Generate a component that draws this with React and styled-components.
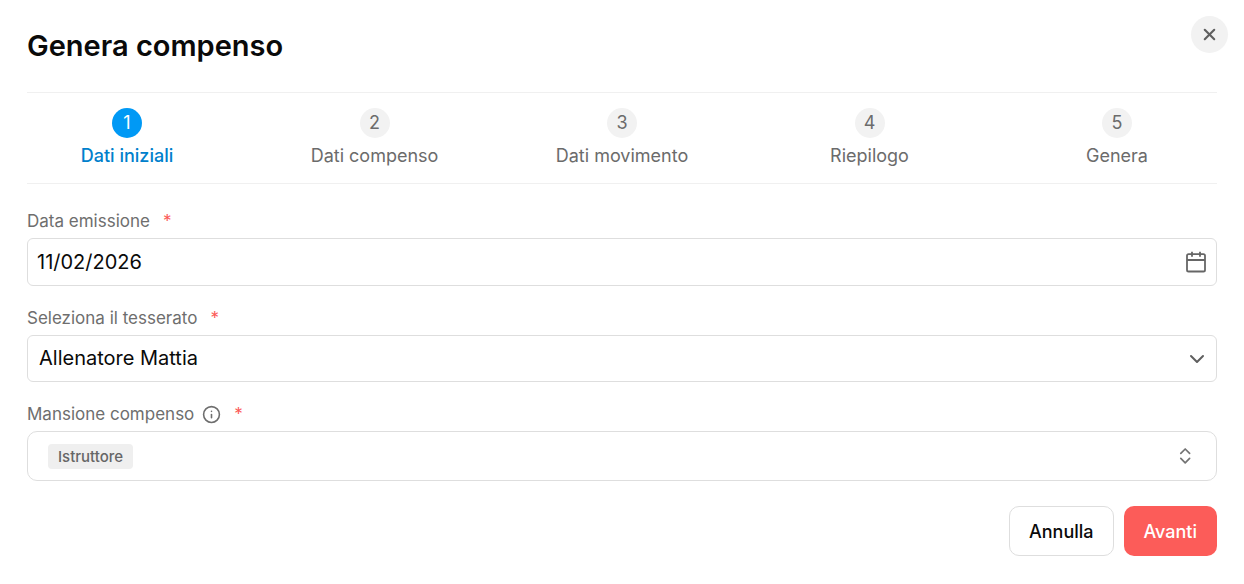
import React, { useState } from "react"
import styled, { createGlobalStyle } from "styled-components"
import { ChevronDown, Info, X } from "lucide-react"

const GlobalStyle = createGlobalStyle`
  *, *::before, *::after {
    box-sizing: border-box;
  }
  body {
    margin: 0;
    background: #fff;
    color: #0a0a0a;
    font-family: Inter, "Liberation Sans", sans-serif;
    font-size: 18px;
  }
  button, input, select {
    font-family: inherit;
    color: inherit;
  }
`

const Dialog = styled.main`
  position: relative;
  padding: 28px 27px;
`

const Title = styled.h1`
  margin: 0 0 28px;
  font-size: 29px;
  line-height: 36px;
  font-weight: 600;
`

const CloseButton = styled.button`
  position: absolute;
  top: 16px;
  right: 16px;
  display: flex;
  align-items: center;
  justify-content: center;
  width: 37px;
  height: 37px;
  padding: 0;
  border: 0;
  border-radius: 50%;
  background: #f2f2f2;
  color: #5f5f5f;
  cursor: pointer;
`

const Steps = styled.ol`
  display: flex;
  justify-content: space-between;
  margin: 0 0 25px;
  padding: 15px 0;
  border-top: 1px solid #f0f0f0;
  border-bottom: 1px solid #f0f0f0;
  list-style: none;
`

const Step = styled.li`
  display: flex;
  flex-direction: column;
  align-items: center;
  gap: 6px;
  width: 200px;
  line-height: 24px;
  font-weight: ${({ $active }) => ($active ? 500 : 400)};
  color: ${({ $active }) => ($active ? "#0080cc" : "#6b6b6b")};
`

const StepNumber = styled.span`
  display: flex;
  align-items: center;
  justify-content: center;
  width: 30px;
  height: 30px;
  border-radius: 50%;
  font-weight: 400;
  background: ${({ $active }) => ($active ? "#0099f5" : "#f2f2f2")};
  color: ${({ $active }) => ($active ? "#fff" : "#6b6b6b")};
`

const Form = styled.form`
  display: flex;
  flex-direction: column;
  gap: 20px;
`

const Field = styled.div`
  display: flex;
  flex-direction: column;
  gap: 5px;
`

const Label = styled.label`
  display: flex;
  align-items: center;
  font-size: 17px;
  line-height: 24px;
  color: #6e6e6e;
  svg {
    margin-left: 8px;
  }
`

const Required = styled.span`
  margin-left: 13px;
  color: #fb5a57;
`

const Control = styled.div`
  display: flex;
  align-items: center;
  height: 48px;
  border: 1px solid #dedede;
  border-radius: 6px;
  background: #fff;
  color: #5f5f5f;
`

const DateInput = styled.input`
  flex: 1;
  min-width: 0;
  height: 100%;
  padding: 0 9px;
  border: 0;
  outline: 0;
  background: transparent;
  color: #0a0a0a;
  font-size: 20px;
`

const IconButton = styled.button`
  display: flex;
  padding: 0 9px;
  border: 0;
  background: transparent;
  cursor: pointer;
`

const SelectBox = styled.div`
  display: grid;
  align-items: center;
  color: #5f5f5f;
  > * {
    grid-area: 1 / 1;
  }
  svg {
    justify-self: end;
    margin-right: 8px;
    pointer-events: none;
  }
`

const Select = styled.select`
  appearance: none;
  width: 100%;
  height: 47px;
  padding: 0 40px 2px 11px;
  border: 1px solid #dedede;
  border-radius: 6px;
  background: #fff;
  color: #0a0a0a;
  font-size: 20px;
`

const MultiSelect = styled.button`
  display: flex;
  align-items: center;
  justify-content: space-between;
  height: 50px;
  padding: 0 22px 0 20px;
  border: 1px solid #dedede;
  border-radius: 10px;
  background: #fff;
  color: #737373;
  cursor: pointer;
`

const Tag = styled.span`
  padding: 0 10px;
  border-radius: 4px;
  background: #efefef;
  color: #666;
  font-size: 15px;
  line-height: 25px;
  font-weight: 500;
`

const Actions = styled.div`
  display: flex;
  justify-content: flex-end;
  gap: 10px;
  margin-top: 5px;
`

const Button = styled.button`
  height: 50px;
  padding: 0 ${({ $primary }) => ($primary ? "20px" : "19px")};
  border: ${({ $primary }) => ($primary ? "0" : "1px solid #dedede")};
  border-radius: 10px;
  background: ${({ $primary }) => ($primary ? "#fc5c59" : "#fff")};
  color: ${({ $primary }) => ($primary ? "#fff" : "#0a0a0a")};
  font-size: 18px;
  font-weight: 500;
  cursor: pointer;
`

const CalendarIcon = () => (
  <svg
    width="22"
    height="22"
    viewBox="0 0 22 22"
    fill="none"
    stroke="#666"
    strokeWidth="1.8"
  >
    <rect x="2" y="3.2" width="18" height="17.3" rx="1.6" />
    <path d="M2 9h18M7 0.8v5M15 0.8v5" />
  </svg>
)

const UpDownIcon = () => (
  <svg
    width="18"
    height="18"
    viewBox="0 0 18 18"
    fill="none"
    stroke="currentColor"
    strokeWidth="1.7"
    strokeLinecap="round"
    strokeLinejoin="round"
  >
    <path d="M4.8 6.4 9.2 2l4.4 4.4M4.8 11.4l4.4 4.4 4.4-4.4" />
  </svg>
)

const steps = [
  "Dati iniziali",
  "Dati compenso",
  "Dati movimento",
  "Riepilogo",
  "Genera",
]

export default function App() {
  const [date, setDate] = useState("11/02/2026")

  return (
    <>
      <GlobalStyle />
      <Dialog>
        <Title>Genera compenso</Title>
        <CloseButton type="button" aria-label="Chiudi">
          <X size={19} strokeWidth={2.6} />
        </CloseButton>
        <Steps>
          {steps.map((step, i) => (
            <Step key={step} $active={i === 0}>
              <StepNumber $active={i === 0}>{i + 1}</StepNumber>
              {step}
            </Step>
          ))}
        </Steps>
        <Form onSubmit={e => e.preventDefault()}>
          <Field>
            <Label htmlFor="data">
              Data emissione <Required>*</Required>
            </Label>
            <Control>
              <DateInput
                id="data"
                type="text"
                value={date}
                onChange={e => setDate(e.target.value)}
              />
              <IconButton type="button" aria-label="Apri calendario">
                <CalendarIcon />
              </IconButton>
            </Control>
          </Field>
          <Field>
            <Label htmlFor="tesserato">
              Seleziona il tesserato <Required>*</Required>
            </Label>
            <SelectBox>
              <Select id="tesserato" defaultValue="mattia">
                <option value="mattia">Allenatore Mattia</option>
              </Select>
              <ChevronDown size={24} />
            </SelectBox>
          </Field>
          <Field>
            <Label htmlFor="mansione">
              Mansione compenso <Info size={19} strokeWidth={2} />
              <Required>*</Required>
            </Label>
            <MultiSelect id="mansione" type="button" aria-haspopup="listbox">
              <Tag>Istruttore</Tag>
              <UpDownIcon />
            </MultiSelect>
          </Field>
          <Actions>
            <Button type="button">Annulla</Button>
            <Button type="submit" $primary>
              Avanti
            </Button>
          </Actions>
        </Form>
      </Dialog>
    </>
  )
}
